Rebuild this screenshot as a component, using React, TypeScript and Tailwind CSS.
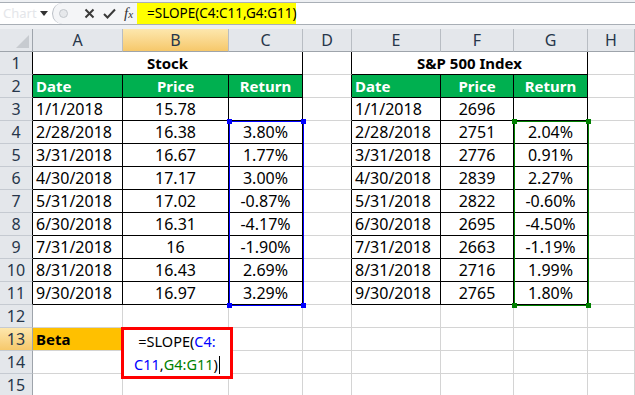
import React from 'react';

const dates = ['1/1/2018', '2/28/2018', '3/31/2018', '4/30/2018', '5/31/2018', '6/30/2018', '7/31/2018', '8/31/2018', '9/30/2018'];
const stockPrice = ['15.78', '16.38', '16.67', '17.17', '17.02', '16.31', '16', '16.43', '16.97'];
const stockReturn = ['', '3.80%', '1.77%', '3.00%', '-0.87%', '-4.17%', '-1.90%', '2.69%', '3.29%'];
const spPrice = ['2696', '2751', '2776', '2839', '2822', '2695', '2663', '2716', '2765'];
const spReturn = ['', '2.04%', '0.91%', '2.27%', '-0.60%', '-4.50%', '-1.19%', '1.99%', '1.80%'];

const letters = ['A', 'B', 'C', 'D', 'E', 'F', 'G', 'H'];

// table blocks live in rows 1-11, cols A-C (1-3) and E-G (5-7)
const inTable = (r: number, c: number) => r >= 1 && r <= 11 && ((c >= 1 && c <= 3) || (c >= 5 && c <= 7));

function cellText(r: number, c: number): string {
  if (r === 2) return ['', 'Date', 'Price', 'Return', '', 'Date', 'Price', 'Return', ''][c];
  if (r >= 3 && r <= 11) {
    const i = r - 3;
    if (c === 1 || c === 5) return dates[i];
    if (c === 2) return stockPrice[i];
    if (c === 3) return stockReturn[i];
    if (c === 6) return spPrice[i];
    if (c === 7) return spReturn[i];
  }
  if (r === 13 && c === 1) return 'Beta';
  return '';
}

function Cell({ r, c, span }: { r: number; c: number; span?: boolean }) {
  const lastCol = span ? c + 2 : c;
  const rightBlack = inTable(r, lastCol) || inTable(r, lastCol + 1);
  const bottomBlack = inTable(r, c) || inTable(r + 1, c);
  const green = r === 2 && inTable(r, c);
  const beta = r === 13 && c === 1;
  const left = c === 1 || c === 5;
  return (
    <div
      className={[
        'flex h-[23px] items-center overflow-hidden whitespace-nowrap border-r border-b px-[3px]',
        span ? 'col-span-3 justify-center font-bold text-[15px]' : left ? 'justify-start' : 'justify-center',
        r === 2 || beta ? 'text-[15px]' : '',
        rightBlack ? 'border-r-black' : 'border-r-[#d4d4d4]',
        bottomBlack ? 'border-b-black' : 'border-b-[#d4d4d4]',
        green ? 'bg-[#00b050] font-bold text-white' : beta ? 'bg-[#ffc000] font-bold' : 'bg-white',
      ].join(' ')}
    >
      {span ? (c === 1 ? 'Stock' : 'S&P 500 Index') : cellText(r, c)}
    </div>
  );
}

function Row({ r }: { r: number }) {
  const cells: React.ReactNode[] = [];
  for (let c = 1; c <= 8; c++) {
    if (r === 1 && (c === 1 || c === 5)) {
      cells.push(<Cell key={c} r={r} c={c} span />);
      c += 2;
      continue;
    }
    cells.push(<Cell key={c} r={r} c={c} />);
  }
  return (
    <>
      <div
        className={[
          'flex h-[23px] items-center justify-center border-r border-b border-b-[#c5cad1] text-[#27364a]',
          r === 13 ? 'bg-linear-to-b from-[#fde7ad] to-[#f6c86a]' : 'bg-[#e4e7eb]',
          inTable(r, 1) ? 'border-r-black' : 'border-r-[#9ea4ab]',
        ].join(' ')}
      >
        {r}
      </div>
      {cells}
    </>
  );
}

function FormulaBar() {
  return (
    <div className="flex h-[29px] flex-col bg-[#eef0f3]">
      <div className="mt-[2px] flex h-[23px] border-y border-[#a9afb6] bg-white">
        <div className="flex w-[52px] items-center justify-between pl-[3px] pr-[4px]">
          <span className="text-[13px] text-[#e4e6ea]">Chart</span>
          <svg width="8" height="5" viewBox="0 0 8 5">
            <path d="M0 0h8L4 5z" fill="#333" />
          </svg>
        </div>
        <div className="flex w-[85px] items-center rounded-l-[11px] border-l border-[#b9bec5] bg-[#f4f5f7]">
          <div className="ml-[6px] h-[9px] w-[9px] rounded-full border border-[#c3c7cc] bg-[#e6e8eb]" />
          <svg className="ml-[16px]" width="11" height="11" viewBox="0 0 11 11">
            <path d="M1.5 1.5l8 8M9.5 1.5l-8 8" stroke="#3a3a3a" strokeWidth="2" />
          </svg>
          <svg className="ml-[8px]" width="13" height="11" viewBox="0 0 13 11">
            <path d="M1 6l3.5 3.5L12 1.5" stroke="#3a3a3a" strokeWidth="2" fill="none" />
          </svg>
          <span className="ml-[8px] font-['Liberation_Serif',serif] text-[15px] italic leading-none text-[#333]">
            f<span className="text-[11px]">x</span>
          </span>
        </div>
        <div className="flex w-[159px] items-center bg-[#ffff00] pl-[10px] text-[13.5px]">=SLOPE(C4:C11,G4:G11)</div>
        <div className="flex-1" />
      </div>
    </div>
  );
}

export default function App() {
  const rows = Array.from({ length: 15 }, (_, i) => i + 1);
  return (
    <div className="relative h-[395px] w-[635px] overflow-hidden bg-white font-['Noto_Sans',sans-serif] text-[16px] text-black">
      <FormulaBar />
      <div className="grid grid-cols-[33px_90px_106px_74px_49px_89px_73px_74px_1fr] text-[16px]">
        <div className="flex h-[23px] items-end justify-end border-r border-b border-[#9ea4ab] bg-[#e4e7eb] p-[3px]">
          <svg width="13" height="13" viewBox="0 0 13 13">
            <path d="M13 0v13H0z" fill="#c7cbd0" />
          </svg>
        </div>
        {letters.map((l) => (
          <div
            key={l}
            className={[
              'flex h-[23px] items-center justify-center border-r border-b border-r-[#b8bdc3] border-b-[#9ea4ab] text-[#27364a]',
              l === 'B' ? 'bg-linear-to-b from-[#fde7ad] to-[#f6c86a]' : 'bg-[#e4e7eb]',
            ].join(' ')}
          >
            {l}
          </div>
        ))}
        {rows.map((r) => (
          <Row key={r} r={r} />
        ))}
      </div>

      {/* selection outlines */}
      <div className="absolute left-[229px] top-[121px] h-[185px] w-[75px] border border-[#0000ff]">
        <div className="absolute -left-[3px] -top-[3px] h-[5px] w-[5px] bg-[#0000ff]" />
        <div className="absolute -right-[3px] -top-[3px] h-[5px] w-[5px] bg-[#0000ff]" />
        <div className="absolute -bottom-[3px] -left-[3px] h-[5px] w-[5px] bg-[#0000ff]" />
        <div className="absolute -bottom-[3px] -right-[3px] h-[5px] w-[5px] bg-[#0000ff]" />
      </div>
      <div className="absolute left-[514px] top-[121px] h-[185px] w-[75px] border border-[#008000]">
        <div className="absolute -left-[3px] -top-[3px] h-[5px] w-[5px] bg-[#008000]" />
        <div className="absolute -right-[3px] -top-[3px] h-[5px] w-[5px] bg-[#008000]" />
        <div className="absolute -bottom-[3px] -left-[3px] h-[5px] w-[5px] bg-[#008000]" />
        <div className="absolute -bottom-[3px] -right-[3px] h-[5px] w-[5px] bg-[#008000]" />
      </div>

      {/* in-cell editor with red callout */}
      <div className="absolute left-[121px] top-[327px] flex h-[52px] w-[112px] flex-col items-center border-[3px] border-[#ff0000] bg-white text-[14.5px] leading-[23px]">
        <div>
          =SLOPE(<span className="text-[#0000ff]">C4:</span>
        </div>
        <div className="flex items-center">
          <span className="text-[#0000ff]">C11</span>,<span className="text-[#008000]">G4:G11</span>)
          <span className="ml-[1px] inline-block h-[18px] w-px bg-black" />
        </div>
      </div>
    </div>
  );
}
